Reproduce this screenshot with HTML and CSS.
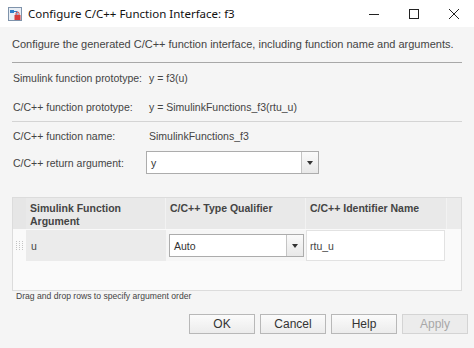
FILE: index.html
```html
<!DOCTYPE html>
<html lang="en">
<head>
    <meta charset="UTF-8">
    <meta name="viewport" content="width=device-width, initial-scale=1.0">
    <title>Configure C/C++ Function Interface: f3</title>
    <link rel="stylesheet" href="styles.css">
</head>
<body>
    <div class="window">
        <div class="titlebar">
            <svg class="app-icon" width="14" height="14" viewBox="0 0 14 14">
                <rect x="0.5" y="0.5" width="13" height="13" fill="#e8eef5" stroke="#7f93ab"/>
                <path d="M2 3 L6 3 L6 6 L2 6 Z" fill="#2f7fc8"/>
                <path d="M6 4.5 L9 4.5 L9 8" stroke="#2f7fc8" fill="none"/>
                <rect x="6.5" y="8" width="6" height="5" fill="#d63b3b"/>
                <path d="M8 8 V6.5 A1.5 1.5 0 0 1 11 6.5 V8" stroke="#d63b3b" fill="none"/>
            </svg>
            <span class="title">Configure C/C++ Function Interface: f3</span>
            <div class="controls">
                <span class="ctl">
                    <svg width="10" height="10" viewBox="0 0 10 10"><path d="M0 5.5 H10" stroke="#222" stroke-width="1"/></svg>
                </span>
                <span class="ctl">
                    <svg width="10" height="10" viewBox="0 0 10 10"><rect x="0.5" y="0.5" width="9" height="9" fill="none" stroke="#222"/></svg>
                </span>
                <span class="ctl">
                    <svg width="10" height="10" viewBox="0 0 10 10"><path d="M0 0 L10 10 M10 0 L0 10" stroke="#222" stroke-width="1"/></svg>
                </span>
            </div>
        </div>

        <div class="content">
            <div class="intro">Configure the generated C/C++ function interface, including function name and arguments.</div>
            <div class="sep dark"></div>

            <div class="field tall">
                <span class="label">Simulink function prototype:</span>
                <span class="value">y = f3(u)</span>
            </div>
            <div class="field tall">
                <span class="label">C/C++ function prototype:</span>
                <span class="value">y = SimulinkFunctions_f3(rtu_u)</span>
            </div>
            <div class="sep"></div>

            <div class="field name-row">
                <span class="label">C/C++ function name:</span>
                <span class="value">SimulinkFunctions_f3</span>
            </div>
            <div class="field ret-row">
                <span class="label">C/C++ return argument:</span>
                <div class="dropdown wide">
                    <span class="dd-text">y</span>
                    <span class="dd-btn"><i class="caret"></i></span>
                </div>
            </div>

            <div class="table">
                <div class="thead">
                    <div class="gutter"></div>
                    <div class="th c1">Simulink Function<br>Argument</div>
                    <div class="th c2">C/C++ Type Qualifier</div>
                    <div class="th c3">C/C++ Identifier Name</div>
                    <div class="th rest"></div>
                </div>
                <div class="trow">
                    <div class="gutter grip">
                        <svg width="7" height="9" viewBox="0 0 7 9">
                            <g fill="#c4c4c4">
                                <rect x="0" y="0" width="1" height="1"/><rect x="3" y="0" width="1" height="1"/><rect x="6" y="0" width="1" height="1"/>
                                <rect x="0" y="2" width="1" height="1"/><rect x="3" y="2" width="1" height="1"/><rect x="6" y="2" width="1" height="1"/>
                                <rect x="0" y="4" width="1" height="1"/><rect x="3" y="4" width="1" height="1"/><rect x="6" y="4" width="1" height="1"/>
                                <rect x="0" y="6" width="1" height="1"/><rect x="3" y="6" width="1" height="1"/><rect x="6" y="6" width="1" height="1"/>
                                <rect x="0" y="8" width="1" height="1"/><rect x="3" y="8" width="1" height="1"/><rect x="6" y="8" width="1" height="1"/>
                            </g>
                        </svg>
                    </div>
                    <div class="td c1 arg">u</div>
                    <div class="td c2">
                        <div class="dropdown">
                            <span class="dd-text">Auto</span>
                            <span class="dd-btn"><i class="caret"></i></span>
                        </div>
                    </div>
                    <div class="td c3 ident">rtu_u</div>
                </div>
            </div>
            <div class="hint">Drag and drop rows to specify argument order</div>

            <div class="buttons">
                <button>OK</button>
                <button>Cancel</button>
                <button>Help</button>
                <button class="disabled">Apply</button>
            </div>
        </div>
    </div>
</body>
</html>
```

FILE: styles.css
```css
* {
    margin: 0;
    padding: 0;
    box-sizing: border-box;
}

body {
    background: #f5f5f5;
    font-family: 'Liberation Sans', Arial, sans-serif;
    color: #333;
}

.window {
    width: 474px;
    height: 348px;
    background: #f5f5f5;
    overflow: hidden;
}

.titlebar {
    height: 27px;
    background: #fff;
    display: flex;
    align-items: center;
    padding-left: 8px;
}

.app-icon {
    margin-right: 6px;
}

.title {
    font-family: 'Noto Sans', sans-serif;
    font-size: 11.5px;
    color: #111;
    flex: 1;
}

.controls {
    display: flex;
    height: 100%;
}

.ctl {
    width: 40px;
    display: flex;
    align-items: center;
    justify-content: center;
}

.content {
    padding: 0 12px;
}

.intro {
    height: 35px;
    line-height: 35px;
    font-size: 11px;
    color: #444;
    white-space: nowrap;
}

.sep {
    height: 1px;
    background: #d4d4d4;
}

.sep.dark {
    background: #a8a8a8;
}

.field {
    display: flex;
    align-items: center;
    font-size: 10.5px;
    color: #444;
    white-space: nowrap;
}

.field.tall {
    height: 29px;
}

.field .label {
    width: 137px;
    padding-left: 1px;
}

.name-row {
    height: 27px;
}

.ret-row {
    height: 27px;
}

.ret-row .label {
    width: 134px;
}

.dropdown {
    display: flex;
    height: 23px;
    background: #fff;
    border: 1px solid #acacac;
    font-size: 10.5px;
    color: #333;
}

.dropdown.wide {
    width: 173px;
}

.dd-text {
    flex: 1;
    padding-left: 4px;
    display: flex;
    align-items: center;
}

.dd-btn {
    width: 17px;
    border-left: 1px solid #c4c4c4;
    background: linear-gradient(#fafafa, #e8e8e8);
    display: flex;
    align-items: center;
    justify-content: center;
}

.caret {
    width: 0;
    height: 0;
    border-left: 3px solid transparent;
    border-right: 3px solid transparent;
    border-top: 4px solid #333;
}

.table {
    margin-top: 21px;
    height: 94px;
    border: 1px solid #dcdcdc;
    background: #fafafa;
}

.thead {
    display: flex;
    height: 31px;
    background: #e9e9e9;
}

.thead .gutter {
    width: 13px;
    background: #e6e6e6;
}

.th {
    font-weight: bold;
    font-size: 10.5px;
    color: #444;
    padding: 4px 4px 0;
    line-height: 13px;
    border-right: 1px solid #f2f2f2;
}

.c1 {
    width: 140px;
}

.c2 {
    width: 140px;
}

.c3 {
    width: 141px;
}

.th.rest {
    flex: 1;
    border-right: none;
    background: #ebebeb;
}

.trow {
    display: flex;
    height: 31px;
    margin-top: 1px;
}

.trow .gutter {
    width: 13px;
    background: #fafafa;
}

.grip {
    display: flex;
    align-items: center;
    justify-content: center;
}

.td {
    display: flex;
    align-items: center;
    font-size: 10.5px;
    color: #444;
}

.td.arg {
    background: #ebebeb;
    padding-left: 5px;
}

.td.c2 {
    padding: 0 2px 0 3px;
    background: #f6f6f6;
}

.td.c2 .dropdown {
    width: 100%;
}

.td.ident {
    width: 139px;
    background: #fff;
    border: 1px solid #e2e2e2;
    padding-left: 3px;
}

.hint {
    font-size: 8.6px;
    color: #444;
    padding: 0 0 0 4px;
    height: 16px;
    line-height: 11px;
}

.buttons {
    display: flex;
    justify-content: flex-end;
    gap: 5px;
    padding-top: 7px;
    margin-right: -6px;
}

button {
    width: 66px;
    height: 20px;
    border: 1px solid #b8b8b8;
    background: linear-gradient(#fbfbfb, #ececec);
    font-family: 'Liberation Sans', Arial, sans-serif;
    font-size: 12px;
    color: #333;
}

button.disabled {
    color: #a8a8a8;
    border-color: #d4d4d4;
    background: #ececec;
}
```
